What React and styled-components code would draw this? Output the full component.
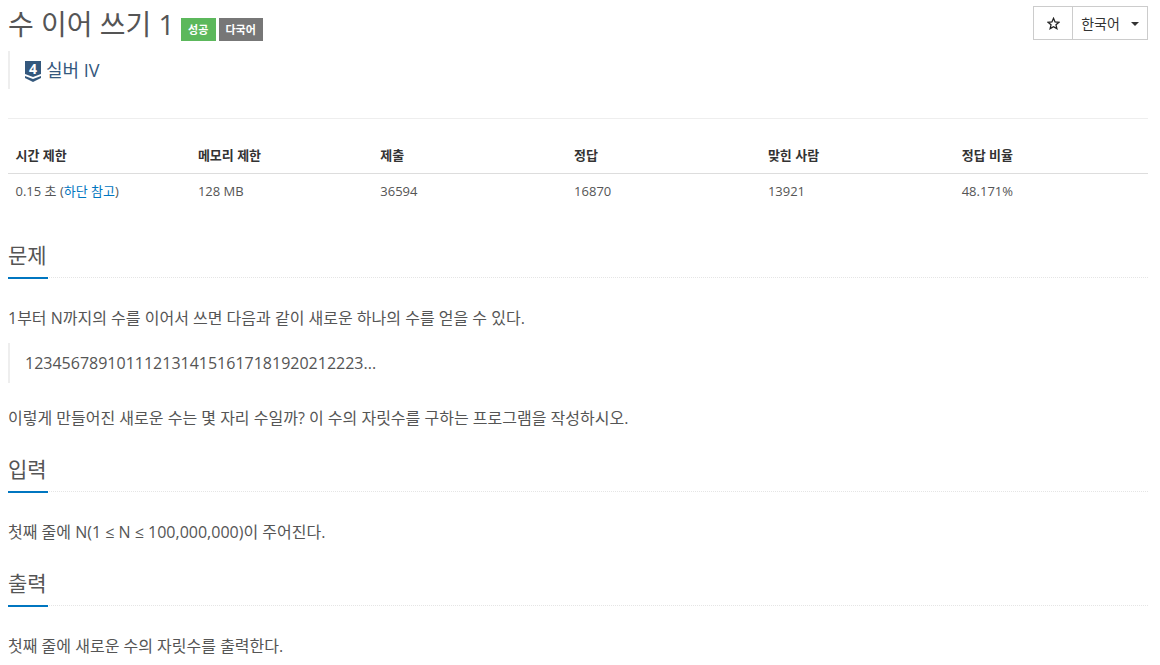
import React from "react";
import styled, { createGlobalStyle } from "styled-components";

const Global = createGlobalStyle`
  html, body { margin: 0; padding: 0; background: #fff; }
  body { font-family: "Open Sans", "Noto Sans CJK KR", sans-serif; font-size: 13px; color: #555; line-height: 1.42857; }
`;
const Page = styled.div`
  padding: 0 12px 0 8px;
  height: 665px;
  overflow: hidden;
  box-sizing: border-box;
`;
const TitleBar = styled.div`
  display: flex;
  justify-content: space-between;
  align-items: flex-start;
  padding-top: 6px;
  height: 51px;
  box-sizing: border-box;
`;
const Title = styled.h1`
  margin: -1px 0 0;
  display: flex;
  align-items: flex-start;
  font-size: 28px;
  font-weight: 400;
  line-height: 38px;
  color: #555;
`;
const Label = styled.span`
  display: inline-block;
  margin: 13px 0 0 ${(p) => p.$gap}px;
  height: 23px;
  width: ${(p) => p.$w}px;
  text-align: center;
  background: ${(p) => p.$bg};
  color: #fff;
  font-size: 11px;
  font-weight: 700;
  line-height: 23px;
`;
const ButtonGroup = styled.div`
  display: flex;
`;
const Btn = styled.button`
  display: flex;
  align-items: center;
  justify-content: center;
  height: 34px;
  width: ${(p) => p.$w}px;
  padding: 0;
  margin-left: ${(p) => (p.$joined ? -1 : 0)}px;
  background: #fff;
  border: 1px solid #ccc;
  color: #333;
  font-family: inherit;
  font-size: 14px;
`;
const Caret = styled.span`
  margin: 2px 0 0 11px;
  width: 0;
  height: 0;
  border-top: 4px solid #333;
  border-left: 4px solid transparent;
  border-right: 4px solid transparent;
`;
const Tier = styled.blockquote`
  margin: 0;
  height: 38px;
  box-sizing: border-box;
  border-left: 2px solid #eee;
  padding: 2px 0 0 15px;
  display: flex;
  align-items: center;
  gap: 5px;
  font-size: 18px;
  color: #34587d;
`;
const Badge = styled.span`
  position: relative;
  display: block;
  width: 16px;
  height: 21px;
`;
const BadgeShape = styled.svg`
  display: block;
`;
const BadgeNumber = styled.span`
  position: absolute;
  left: 0;
  top: 0;
  width: 16px;
  height: 16px;
  text-align: center;
  font-size: 14px;
  font-weight: 700;
  line-height: 16px;
  color: #fff;
`;
const Rule = styled.hr`
  border: 0;
  border-top: 1px solid #eee;
  margin: 29px 0 19px;
`;
const Table = styled.table`
  width: 100%;
  border-collapse: collapse;
  table-layout: fixed;
  font-size: 13px;
`;
const Head = styled.th`
  width: ${(p) => p.$w}%;
  text-align: left;
  font-weight: 700;
  color: #333;
  padding: 8px 7.5px;
  height: 34px;
  box-sizing: border-box;
  border-bottom: 1px solid #ddd;
`;
const Cell = styled.td`
  padding: 8px 7.5px;
  height: 35px;
  box-sizing: border-box;
`;
const A = styled.a`
  color: #0076c0;
`;
const Section = styled.section`
  margin-top: ${(p) => p.$top}px;
`;
const Heading = styled.h2`
  margin: 0;
  height: 37px;
  font-size: 21px;
  font-weight: 400;
  line-height: 28px;
  color: #555;
  border-bottom: 1px dotted #e5e5e5;
  position: relative;
  box-sizing: border-box;
  &::after {
    content: "";
    position: absolute;
    left: 0;
    bottom: -2px;
    width: 40px;
    height: 2px;
    background: #0076c0;
  }
`;
const P = styled.p`
  margin: ${(p) => p.$top}px 0 0;
  font-size: 16px;
  line-height: 20px;
  color: #555;
`;
const Quote = styled.blockquote`
  margin: 15px 0 0;
  height: 40px;
  box-sizing: border-box;
  border-left: 2px solid #eee;
  padding-left: 15px;
  font-size: 16px;
  line-height: 40px;
  color: #555;
`;

const TierIcon = () => (
  <Badge>
    <BadgeShape width="16" height="21" viewBox="0 0 16 21">
      <path d="M0 0h16v13l-8 3-8-3z" fill="#34587d" />
      <path d="M0 15l8 3 8-3v2l-8 4-8-4z" fill="#34587d" />
    </BadgeShape>
    <BadgeNumber>4</BadgeNumber>
  </Badge>
);

const StarIcon = () => (
  <svg width="13" height="13" viewBox="0 0 24 24" fill="none" stroke="#222" strokeWidth="2.4" strokeLinejoin="miter">
    <path d="M12 2.5l2.9 6.6 7.1.7-5.4 4.7 1.6 7-6.2-3.7-6.2 3.7 1.6-7L2 9.8l7.1-.7z" />
  </svg>
);

const rows = [
  ["시간 제한", 16],
  ["메모리 제한", 16],
  ["제출", 17],
  ["정답", 17],
  ["맞힌 사람", 17],
  ["정답 비율", 17],
];

export default function App() {
  return (
    <Page>
      <Global />
      <TitleBar>
        <Title>
          수 이어 쓰기 1
          <Label $bg="#5cb85c" $gap={6} $w={35}>성공</Label>
          <Label $bg="#777" $gap={3} $w={44}>다국어</Label>
        </Title>
        <ButtonGroup>
          <Btn $w={40}><StarIcon /></Btn>
          <Btn $w={76} $joined>한국어<Caret /></Btn>
        </ButtonGroup>
      </TitleBar>
      <Tier><TierIcon />실버 IV</Tier>
      <Rule />
      <Table>
        <thead>
          <tr>{rows.map(([t, w]) => <Head key={t} $w={w}>{t}</Head>)}</tr>
        </thead>
        <tbody>
          <tr>
            <Cell>0.15 초 (<A>하단 참고</A>)</Cell>
            <Cell>128 MB</Cell>
            <Cell>36594</Cell>
            <Cell>16870</Cell>
            <Cell>13921</Cell>
            <Cell>48.171%</Cell>
          </tr>
        </tbody>
      </Table>
      <Section $top={33}>
        <Heading>문제</Heading>
        <P $top={30}>1부터 N까지의 수를 이어서 쓰면 다음과 같이 새로운 하나의 수를 얻을 수 있다.</P>
        <Quote>1234567891011121314151617181920212223...</Quote>
        <P $top={25}>이렇게 만들어진 새로운 수는 몇 자리 수일까? 이 수의 자릿수를 구하는 프로그램을 작성하시오.</P>
      </Section>
      <Section $top={27}>
        <Heading>입력</Heading>
        <P $top={30}>첫째 줄에 N(1 ≤ N ≤ 100,000,000)이 주어진다.</P>
      </Section>
      <Section $top={27}>
        <Heading>출력</Heading>
        <P $top={30}>첫째 줄에 새로운 수의 자릿수를 출력한다.</P>
      </Section>
    </Page>
  );
}
